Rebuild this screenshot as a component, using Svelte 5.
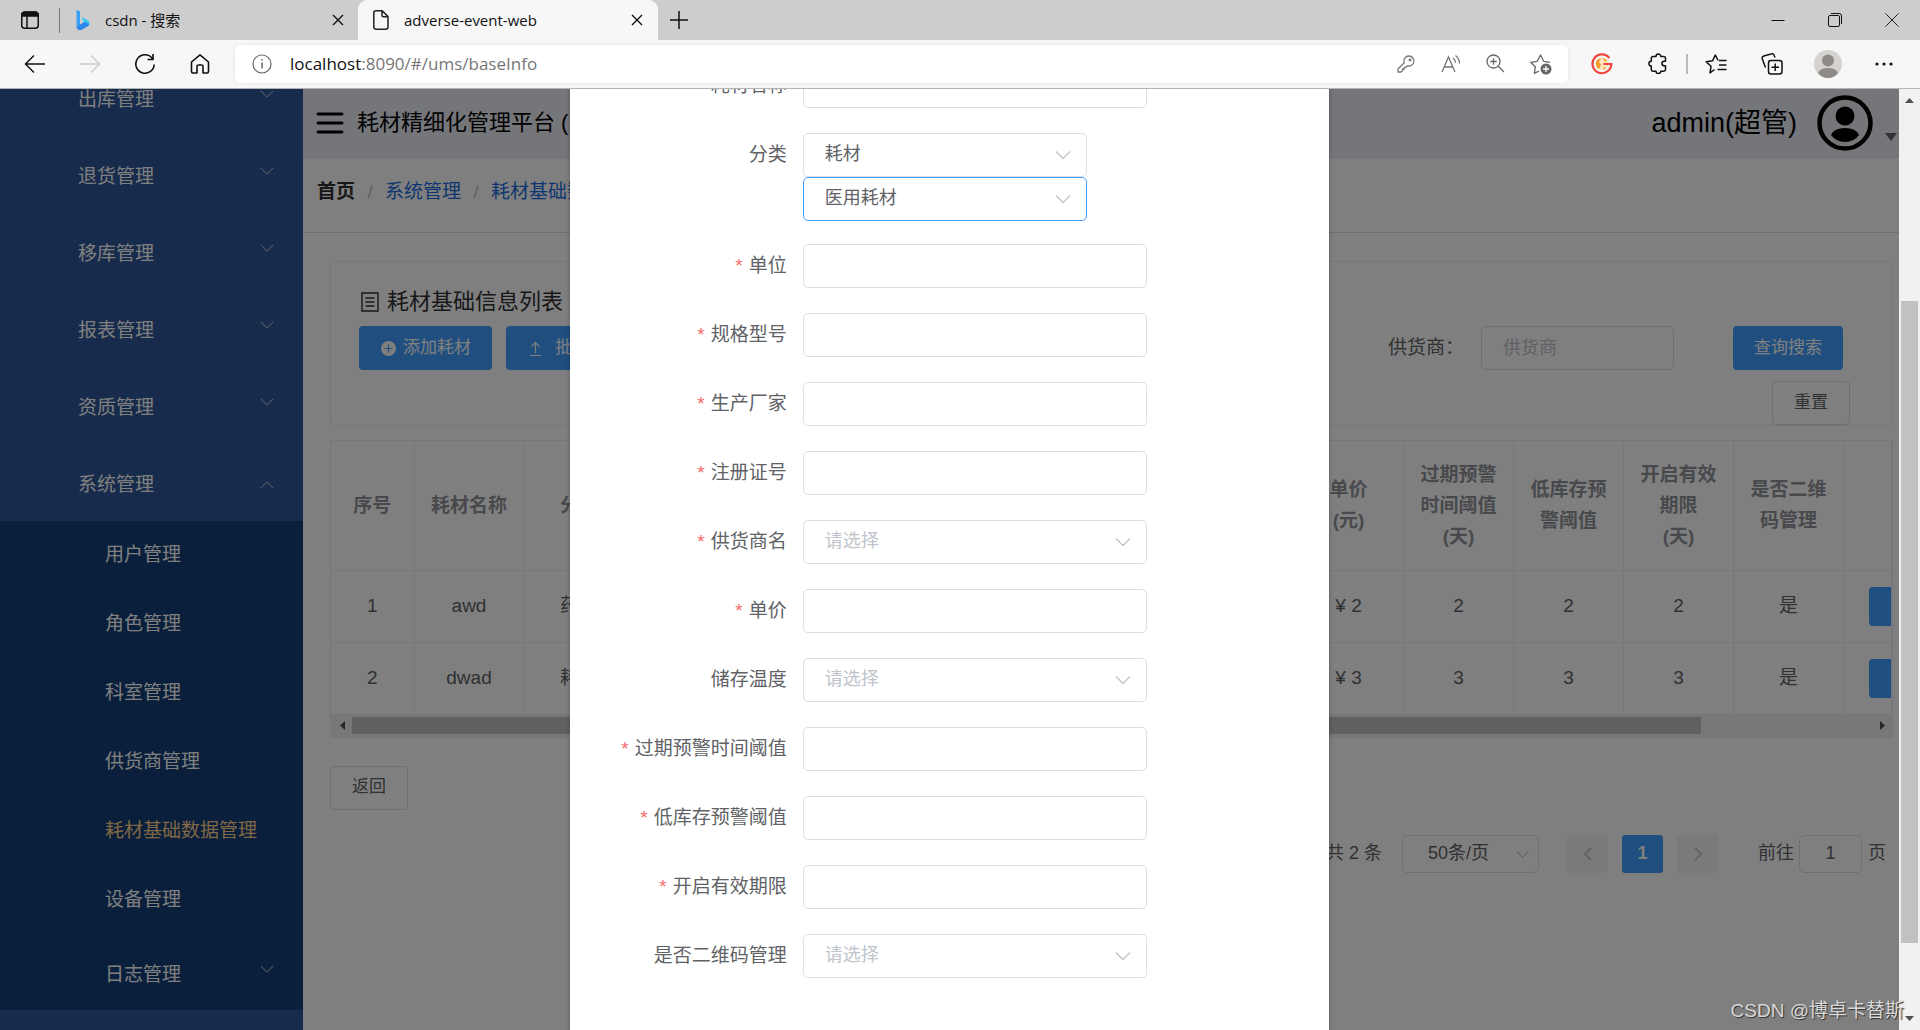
<script>
  const menu = ['出库管理', '退货管理', '移库管理', '报表管理', '资质管理', '系统管理'];
  const submenu = ['用户管理', '角色管理', '科室管理', '供货商管理', '耗材基础数据管理', '设备管理'];
  const current = '耗材基础数据管理';

  const columns = [
    { width: 83, title: ['序号'] },
    { width: 110, title: ['耗材名称'] },
    { width: 110, title: ['分类'] },
    { width: 0, title: [] },
    { width: 110, title: ['单价', '(元)'] },
    { width: 110, title: ['过期预警', '时间阈值', '(天)'] },
    { width: 110, title: ['低库存预', '警阈值'] },
    { width: 110, title: ['开启有效', '期限', '(天)'] },
    { width: 110, title: ['是否二维', '码管理'] },
    { width: 48, title: [] }
  ];
  const rows = [
    ['1', 'awd', '药品', '', '¥ 2', '2', '2', '2', '是'],
    ['2', 'dwad', '耗材', '', '¥ 3', '3', '3', '3', '是']
  ];

  const fields = [
    { id: 'unit', label: '单位', required: true },
    { id: 'spec', label: '规格型号', required: true },
    { id: 'maker', label: '生产厂家', required: true },
    { id: 'license', label: '注册证号', required: true },
    { id: 'supplier', label: '供货商名', required: true, select: true },
    { id: 'price', label: '单价', required: true },
    { id: 'temp', label: '储存温度', select: true },
    { id: 'expire', label: '过期预警时间阈值', required: true },
    { id: 'stock', label: '低库存预警阈值', required: true },
    { id: 'valid', label: '开启有效期限', required: true },
    { id: 'qr', label: '是否二维码管理', select: true }
  ];
</script>

{#snippet chevron(size)}
  <svg class="chev" width={size} height={size} viewBox="0 0 16 16" fill="none" stroke="currentColor" stroke-width="1.3"><path d="M1 4.5 8 11.5 15 4.5" /></svg>
{/snippet}

{#snippet cross()}
  <svg width="12" height="12" viewBox="0 0 12 12" fill="none" stroke="currentColor" stroke-width="1.4"><path d="M1 1 11 11M11 1 1 11" /></svg>
{/snippet}

<div class="window">
  <div class="tabs">
    <button class="workspace" aria-label="Tab actions">
      <svg width="20" height="20" viewBox="0 0 20 20" fill="none" stroke="#111" stroke-width="1.5"><rect x="1.75" y="2.25" width="16.5" height="16" rx="3" /><path d="M7 6v12" /><path d="M2 5.5V5a3 3 0 0 1 3-3h10a3 3 0 0 1 3 3v1H2z" fill="#111" /></svg>
    </button>
    <div class="tab idle">
      <svg width="16" height="20" viewBox="0 0 16 20"><path d="M1.500 0 5 1.300V15L1.500 17.500z" fill="#3aa0f5" /><path d="M6.500 7 12 9.800q3 1.600 2.400 5L8.500 11.800z" fill="#35c8f5" /><path d="m1.500 17.500 3.500-3 4.500-2.800 4.900 2.500q-.4 1.500-1.900 2.400L6.500 19.700q-2.500 1-4-.700a2.500 2.500 0 0 1-1-1.500z" fill="#2b86f0" /></svg>
      <span>csdn - 搜索</span>
      <button aria-label="Close tab">{@render cross()}</button>
    </div>
    <div class="tab active">
      <svg width="18" height="20" viewBox="0 0 18 20" fill="none" stroke="#222" stroke-width="1.500"><path d="M3.500.8h6.700L16 6.600V17a2.200 2.200 0 0 1-2.200 2.200H4A2.200 2.200 0 0 1 1.800 17V3A2.200 2.200 0 0 1 4 .8M10 1v4.600a1.200 1.200 0 0 0 1.200 1.200H16" /></svg>
      <span>adverse-event-web</span>
      <button aria-label="Close tab">{@render cross()}</button>
    </div>
    <button class="newtab" aria-label="New tab">
      <svg width="18" height="18" viewBox="0 0 18 18" stroke="#111" stroke-width="1.500"><path d="M9 0v18M0 9h18" /></svg>
    </button>
    <div class="winctl">
      <button aria-label="Minimize"><svg width="14" height="14" viewBox="0 0 14 14" stroke="#111"><path d="M.5 7.500h13" /></svg></button>
      <button aria-label="Restore"><svg width="14" height="14" viewBox="0 0 14 14" fill="none" stroke="#111"><rect x=".5" y="2.500" width="11" height="11" rx="1.500" /><path d="M3 .5h8a2.500 2.500 0 0 1 2.500 2.500v8" /></svg></button>
      <button aria-label="Close"><svg width="14" height="14" viewBox="0 0 14 14" stroke="#222"><path d="M.5.5 13.500 13.500M13.500.5.5 13.500" /></svg></button>
    </div>
  </div>

  <div class="toolbar">
    <button class="tool" aria-label="Back"><svg width="22" height="20" viewBox="0 0 22 20" fill="none" stroke="#111" stroke-width="1.500"><path d="M10 1.500 1.500 10 10 18.500M1.500 10H21" /></svg></button>
    <button class="tool" aria-label="Forward"><svg width="22" height="20" viewBox="0 0 22 20" fill="none" stroke="#ccc" stroke-width="1.500"><path d="M12 1.500 20.500 10 12 18.500M20.500 10H1" /></svg></button>
    <button class="tool" aria-label="Reload"><svg width="22" height="22" viewBox="0 0 22 22" fill="none" stroke="#111" stroke-width="1.600"><path d="M20.200 11.500A9.200 9.200 0 1 1 18.300 5.400M19 1v5.500h-5.500" /></svg></button>
    <button class="tool" aria-label="Home"><svg width="20" height="22" viewBox="0 0 20 22" fill="none" stroke="#111" stroke-width="1.600" stroke-linejoin="round"><path d="M1.500 9 10 1.800 18.500 9v9.500a1.500 1.500 0 0 1-1.500 1.500h-4v-6.500a1.500 1.500 0 0 0-1.500-1.500h-3A1.500 1.500 0 0 0 7 13.500V20H3a1.500 1.500 0 0 1-1.500-1.500z" /></svg></button>

    <div class="address">
      <svg class="info" width="20" height="20" viewBox="0 0 20 20" fill="none" stroke="#666" stroke-width="1.200"><circle cx="10" cy="10" r="9" /><path d="M10 8.500v6M10 5v1.600" stroke-width="1.500" /></svg>
      <a class="url" href="#/ums/baseInfo"><b>localhost</b>:8090/#/ums/baseInfo</a>
      <button aria-label="Password"><svg width="18" height="18" viewBox="0 0 18 18" fill="none" stroke="#767676" stroke-width="1.300" stroke-linejoin="round"><path d="M12 1a5 5 0 1 1-1.500 9.800L9 12.300H7.300V14H5.600v1.700L4 17H1v-3l6.200-6.200A5 5 0 0 1 12 1z" /><circle cx="13" cy="5" r=".8" /></svg></button>
      <button aria-label="Read aloud"><svg width="20" height="20" viewBox="0 0 20 20" fill="none" stroke="#767676" stroke-width="1.300"><path d="M1 18 7.500 3 14 18M3.300 13h8.400M12 4q2.500 2 2.500 5M14.500 1.500Q18.500 4.500 18.500 9.500" /></svg></button>
      <button aria-label="Zoom"><svg width="19" height="19" viewBox="0 0 19 19" fill="none" stroke="#666" stroke-width="1.300"><circle cx="7.500" cy="7.500" r="6.500" /><path d="M12.300 12.300 18 18M7.500 4.300v6.400M4.300 7.500h6.400" /></svg></button>
      <button aria-label="Add favorite"><svg width="22" height="22" viewBox="0 0 22 22" fill="none" stroke="#666" stroke-width="1.300" stroke-linejoin="round"><path d="M9 18 4.400 20.300 5.300 13.800.8 9.300 7.200 8.300 10.500 2l3.200 6.300 6.300 1" /><circle cx="16" cy="16" r="5.500" fill="#666" stroke="none" /><path d="M16 13v6M13 16h6" stroke="#fff" /></svg></button>
    </div>

    <button class="ext" aria-label="Extension"><svg width="22" height="22" viewBox="0 0 22 22" fill="none"><circle cx="11" cy="11" r="6.500" fill="#ffe4c0" /><path d="M5 9q2-4 5-3.500L8 9l2 3-2 4Q4.500 14 5 9zM12 5l4 2-2 2zM12 15l3-1-2 3z" fill="#f59a23" /><path d="M18.300 5A9.400 9.400 0 1 0 20.300 11H12.500" stroke="#f2453d" stroke-width="2.200" /></svg></button>
    <button class="ext" aria-label="Extensions"><svg width="20" height="21" viewBox="0 0 20 21" fill="none" stroke="#111" stroke-width="1.500" stroke-linejoin="round"><path d="M5 3.500h3a2.400 2.400 0 0 1 4.800 0h3A1.700 1.700 0 0 1 17.500 5v3.200h-1.300a2.300 2.300 0 0 0 0 4.600h1.300V16.500a1.700 1.700 0 0 1-1.700 1.700h-3a2.400 2.400 0 0 1-4.800 0h-3A1.700 1.700 0 0 1 3.300 16.500v-3.400a2.400 2.400 0 0 1 0-4.800V5.200A1.700 1.700 0 0 1 5 3.500z" /></svg></button>
    <span class="bar"></span>
    <button class="ext" aria-label="Favorites"><svg width="22" height="20" viewBox="0 0 22 20" fill="none" stroke="#111" stroke-width="1.500" stroke-linejoin="round"><path d="M9.500 15.500 5 18.800 6 12.300 1.200 7.800 7.500 6.800 10.300 1l2.800 5.500M14 6.500h7.500M14 11h7.500M12.500 15.500h9" /></svg></button>
    <button class="ext" aria-label="Collections"><svg width="22" height="22" viewBox="0 0 22 22" fill="none" stroke="#111" stroke-width="1.500"><rect x="7.500" y="7.500" width="13.500" height="13.500" rx="2.500" /><path d="M14.200 10.500v7.500M10.500 14.200H18M4.500 14.500 1.300 6A2.500 2.500 0 0 1 2.800 3L10 1a2.500 2.500 0 0 1 3.200 1.500L14 4.500" /></svg></button>
    <button class="ext" aria-label="Profile"><svg width="28" height="28" viewBox="0 0 28 28"><circle cx="14" cy="14" r="14" fill="#d5d3d0" /><circle cx="14" cy="10.500" r="6" fill="#8f8a86" /><path d="M4 23q2-5 10-5t10 5q-4 5-10 5T4 23z" fill="#8f8a86" /></svg></button>
    <button class="ext" aria-label="More"><svg width="18" height="4" viewBox="0 0 18 4" fill="#111"><circle cx="2" cy="2" r="1.600" /><circle cx="9" cy="2" r="1.600" /><circle cx="16" cy="2" r="1.600" /></svg></button>
  </div>

  <div class="viewport">
    <div class="page">
      <nav class="side">
        <ul class="menu">
          {#each menu as item, i}
            <li><button><span>{item}</span><i class:up={i === menu.length - 1}>{@render chevron(14)}</i></button></li>
          {/each}
        </ul>
        <ul class="sub">
          {#each submenu as item}
            <li><a href="#/ums" class:current={item === current}>{item}</a></li>
          {/each}
          <li class="log"><button><span>日志管理</span><i>{@render chevron(14)}</i></button></li>
        </ul>
      </nav>

      <main>
        <header>
          <button class="burger" aria-label="Toggle menu"><svg width="28" height="22" viewBox="0 0 28 22" stroke="#000" stroke-width="3" stroke-linecap="round"><path d="M2 2h24M2 11h24M2 20h24" /></svg></button>
          <h1>耗材精细化管理平台 (</h1>
          <button class="user">
            <span>admin(超管)</span>
            <svg width="56" height="56" viewBox="0 0 56 56"><circle cx="28" cy="28" r="25.500" fill="none" stroke="#000" stroke-width="4.500" /><circle cx="28" cy="21" r="9.500" /><path d="M14 40q3-7 14-7t14 7q-5 7-14 7t-14-7z" /></svg>
            <i class="caret"></i>
          </button>
        </header>
        <div class="crumbs">
          <strong>首页</strong><em>/</em><a href="#/ums">系统管理</a><em>/</em><a href="#/ums/baseInfo">{current}</a>
        </div>

        <div class="content">
          <section class="card">
            <h2>
              <svg width="18" height="20" viewBox="0 0 18 20" fill="none" stroke="currentColor" stroke-width="1.400"><path d="M1 1h16v18H1zM4.500 6h9M4.500 10h9M4.500 14h9" /></svg>
              耗材基础信息列表
            </h2>
            <div class="actions">
              <button class="primary add">
                <svg width="17" height="17" viewBox="0 0 17 17"><circle cx="8.500" cy="8.500" r="7.500" fill="#fff" /><path d="M8.500 4.500v8M4.500 8.500h8" stroke="#409eff" stroke-width="1.200" /></svg>添加耗材
              </button>
              <button class="primary upload">
                <svg width="17" height="17" viewBox="0 0 17 17" fill="none" stroke="#fff" stroke-width="1.200"><path d="M8.500 13V2.500M4.500 6.500l4-4 4 4M3 15.500h11" /></svg>批量导入
              </button>
              <form class="search">
                <div class="line">
                  <label for="q">供货商：</label>
                  <input id="q" placeholder="供货商" />
                  <button type="button" class="primary query">查询搜索</button>
                </div>
                <button type="button" class="plain">重置</button>
              </form>
            </div>
          </section>

          <div class="tablebox">
            <table>
              <colgroup>
                {#each columns as c}<col style:width={c.width ? `${c.width}px` : 'auto'} />{/each}
              </colgroup>
              <thead>
                <tr>
                  {#each columns as c}<th>{#each c.title as t}<div>{t}</div>{/each}</th>{/each}
                </tr>
              </thead>
              <tbody>
                {#each rows as r}
                  <tr>
                    {#each r as cell}<td>{cell}</td>{/each}
                    <td class="op"><button class="primary" aria-label="编辑"></button></td>
                  </tr>
                {/each}
              </tbody>
            </table>
            <div class="hscroll"><i class="left"></i><span></span><i class="right"></i></div>
          </div>

          <button class="plain back">返回</button>

          <div class="pager">
            <span>共 2 条</span>
            <div class="size">
              <select aria-label="每页条数"><option>50条/页</option></select>
              {@render chevron(13)}
            </div>
            <button class="pg prev" aria-label="上一页"><svg width="10" height="16" viewBox="0 0 10 16" fill="none" stroke="currentColor" stroke-width="1.800"><path d="M8 2 2 8l6 6" /></svg></button>
            <button class="pg on">1</button>
            <button class="pg next" aria-label="下一页"><svg width="10" height="16" viewBox="0 0 10 16" fill="none" stroke="currentColor" stroke-width="1.800"><path d="m2 2 6 6-6 6" /></svg></button>
            <label for="jump">前往</label>
            <input id="jump" value="1" />
            <span>页</span>
          </div>
        </div>
      </main>

      <div class="mask">
        <form class="dialog">
          <div class="field">
            <label class="required" for="name">耗材名称</label>
            <div class="control"><input id="name" /></div>
          </div>
          <div class="field">
            <label for="kind">分类</label>
            <div class="pair">
              <div class="control"><select id="kind"><option>耗材</option></select>{@render chevron(16)}</div>
              <div class="control"><select class="focus" aria-label="子分类"><option>医用耗材</option></select>{@render chevron(16)}</div>
            </div>
          </div>
          {#each fields as f}
            <div class="field">
              <label class:required={f.required} for={f.id}>{f.label}</label>
              <div class="control">
                {#if f.select}
                  <select id={f.id} class="empty"><option>请选择</option></select>
                  {@render chevron(16)}
                {:else}
                  <input id={f.id} />
                {/if}
              </div>
            </div>
          {/each}
        </form>
      </div>
    </div>

    <div class="vscroll"><i class="top"></i><span></span><i class="bottom"></i></div>
    <div class="watermark">CSDN @博卓卡替斯</div>
  </div>
</div>

<style>
  :global(body) { margin: 0; }
  .window, .window * { box-sizing: border-box; }
  .window {
    display: flex; flex-direction: column; height: 100vh; overflow: hidden;
    font-family: "Liberation Sans", "Noto Sans CJK SC", sans-serif; font-size: 19px; line-height: 1.2; color: #606266;
  }
  button, input, select { font: inherit; color: inherit; margin: 0; }
  button { border: 0; padding: 0; background: none; display: flex; align-items: center; justify-content: center; }
  ul { list-style: none; margin: 0; padding: 0; }
  svg { display: block; flex: none; }
  a { text-decoration: none; color: inherit; }

  .tabs { flex: none; display: flex; align-items: center; height: 40px; background: #cdcdcd; font: 15px/20px "Open Sans", "Noto Sans CJK SC", sans-serif; color: #111; }
  .workspace { width: 60px; height: 25px; border-right: 1px solid #777; }
  .tab { display: flex; align-items: center; height: 40px; }
  .tab span { flex: 1; white-space: nowrap; }
  .tab button { width: 28px; height: 28px; }
  .idle { width: 298px; padding: 0 6px 0 15px; gap: 14px; }
  .active { width: 300px; padding: 0 7px 0 14px; gap: 14px; background: #f7f7f7; border-radius: 9px 9px 0 0; }
  .newtab { width: 42px; height: 40px; }
  .winctl { display: flex; margin-left: auto; }
  .winctl button { width: 57px; height: 38px; }

  .toolbar { flex: none; display: flex; align-items: center; height: 49px; padding: 0 8px 1px 7px; background: #f7f7f7; border-bottom: 1px solid #b4b4b4; }
  .tool { width: 55px; height: 40px; }
  .ext { width: 56px; height: 40px; }
  .bar { width: 2px; height: 20px; background: #bbb; }
  .address { flex: 1; display: flex; align-items: center; height: 38px; margin: 0 6px 0 8px; padding: 0 5px 0 17px; background: #fff; border-radius: 5px; box-shadow: 0 0 4px #e4e4e4; }
  .address button { width: 45px; height: 36px; }
  .url { flex: 1; margin-left: 18px; font: 17px/22px "Open Sans", sans-serif; color: #767676; }
  .url b { font-weight: 400; color: #111; }

  .viewport { flex: 1; min-height: 0; display: flex; position: relative; }
  .page { flex: 1; min-width: 0; display: flex; position: relative; overflow: hidden; background: #fff; }

  .side { flex: none; width: 303px; background: #2e5698; color: #fff; overflow: hidden; }
  .menu { margin-top: -30px; }
  .side button { width: 100%; height: 77px; padding: 5px 29px 0 78px; justify-content: space-between; }
  .side i { height: 26px; color: #a3b0c8; }
  .side i.up { height: 14px; transform: scaleY(-1); }
  .sub { background: #143e76; }
  .sub a { display: flex; align-items: center; height: 69px; padding-left: 105px; }
  .sub a.current { color: #ffd08a; }
  .sub .log button { height: 75px; padding-left: 105px; }

  main { flex: 1; min-width: 0; }
  header { display: flex; align-items: center; height: 69px; padding-left: 13px; background: #ebedf4; border-bottom: 1px solid #dcdfe6; color: #000; }
  h1 { margin: 0 0 0 13px; font-size: 22px; font-weight: 400; white-space: nowrap; }
  .user { margin-left: auto; gap: 20px; font-size: 27px; padding-right: 2px; }
  .caret { width: 12px; height: 8px; margin: 28px 0 0 -8px; background: #606266; clip-path: polygon(0 0, 100% 0, 50% 100%); }
  .crumbs { display: flex; align-items: center; height: 75px; padding: 0 0 6px 14px; border-bottom: 1px solid #dcdfe6; }
  .crumbs strong { color: #303133; }
  .crumbs em { width: 30px; text-align: center; font-style: normal; color: #c0c4cc; }
  .crumbs a { color: #1a6de0; }

  .content { padding: 28px 6px 0 27px; }
  .card { height: 165px; padding: 24px 42px 0 28px; border: 1px solid #ebeef5; border-radius: 5px; }
  h2 { display: flex; align-items: center; gap: 8px; height: 32px; margin: 0 0 8px 2px; font-size: 22px; font-weight: 400; color: #303133; }
  .actions { display: flex; align-items: flex-start; gap: 14px; }
  .primary { height: 44px; background: #409eff; color: #fff; border-radius: 4px; font-size: 17px; white-space: nowrap; }
  .plain { height: 44px; padding: 0 21px; border: 1px solid #dcdfe6; border-radius: 4px; background: #fff; font-size: 17px; }
  .add { padding: 0 21px; gap: 6px; }
  .upload { padding: 0 21px; gap: 11px; }
  .search { margin-left: auto; display: flex; flex-direction: column; align-items: flex-end; gap: 11px; }
  .line { display: flex; align-items: center; margin-right: 7px; }
  .line label { width: 93px; white-space: nowrap; }
  .line input { width: 193px; margin-right: 59px; }
  .query { width: 110px; }
  input, select { height: 44px; padding: 0 21px; border: 1px solid #dcdfe6; border-radius: 5px; background: #fff; outline: 0; font-size: 18px; appearance: none; }
  ::placeholder { color: #c0c4cc; opacity: 1; }

  .tablebox { margin-top: 14px; border: 1px solid #ebeef5; overflow: hidden; }
  table { width: 100%; table-layout: fixed; border-collapse: collapse; }
  th, td { padding: 0; text-align: center; border-right: 1px solid #ebeef5; border-bottom: 1px solid #ebeef5; white-space: nowrap; overflow: hidden; }
  th { height: 129px; line-height: 31px; color: #909399; }
  td { height: 72px; }
  .op button { width: 60px; height: 39px; margin-left: 25px; }
  .hscroll { display: flex; align-items: center; height: 22px; padding: 0 7px 0 9px; background: #f1f1f1; }
  .hscroll span { flex: 1; height: 17px; margin: 0 179px 0 7px; background: #c1c1c1; }
  .hscroll i { width: 5px; height: 9px; background: #505050; }
  .left { clip-path: polygon(100% 0, 100% 100%, 0 50%); }
  .right { clip-path: polygon(0 0, 100% 50%, 0 100%); }
  .back { margin-top: 28px; }

  .pager { display: flex; align-items: center; justify-content: flex-end; height: 38px; margin-top: 25px; padding-right: 7px; font-size: 18px; }
  .size { position: relative; width: 137px; margin: 0 28px 0 20px; }
  .size select { width: 100%; height: 38px; padding-left: 25px; }
  .size .chev { position: absolute; right: 10px; top: 13px; color: #c0c4cc; }
  .pg { width: 41px; height: 38px; margin-right: 14px; border-radius: 3px; background: #f4f4f5; color: #c0c4cc; font-weight: 700; }
  .on { background: #409eff; color: #fff; }
  .next { margin-right: 40px; }
  .pager input { width: 63px; height: 38px; margin: 0 6px 0 5px; padding: 0; text-align: center; }

  .mask { position: absolute; inset: 0; background: rgba(0, 0, 0, .5); }
  .dialog { display: flex; flex-direction: column; gap: 25px; width: 40%; height: 1100px; margin: -25px auto 0; background: #fff; box-shadow: 0 1px 4px rgba(0, 0, 0, .3); }
  .field { display: flex; gap: 16px; }
  .field > label { width: 217px; line-height: 44px; text-align: right; white-space: nowrap; }
  .required::before { content: "*"; margin-right: 6px; color: #f56c6c; }
  .control { position: relative; width: 344px; height: 44px; }
  .control input, .control select { display: block; width: 100%; }
  .control .chev { position: absolute; right: 16px; top: 14px; color: #c0c4cc; }
  .pair { display: grid; grid-template-rows: 44px 42px; }
  .pair .control { width: 284px; }
  .control select.focus { border-color: #409eff; }
  .control select.empty { color: #c0c4cc; }

  .vscroll { flex: none; width: 21px; display: flex; flex-direction: column; align-items: center; padding: 9px 0; background: #f1f1f1; }
  .vscroll span { flex: 1; width: 17px; margin: 198px 0 73px; background: #c1c1c1; }
  .vscroll i { width: 9px; height: 5px; background: #505050; }
  .top { clip-path: polygon(50% 0, 100% 100%, 0 100%); }
  .bottom { clip-path: polygon(0 0, 100% 0, 50% 100%); }
  .watermark { position: absolute; right: 16px; bottom: 4px; font-size: 19px; line-height: 30px; color: #d8d8d8; text-shadow: 1px 1px 1px #333; }
</style>
